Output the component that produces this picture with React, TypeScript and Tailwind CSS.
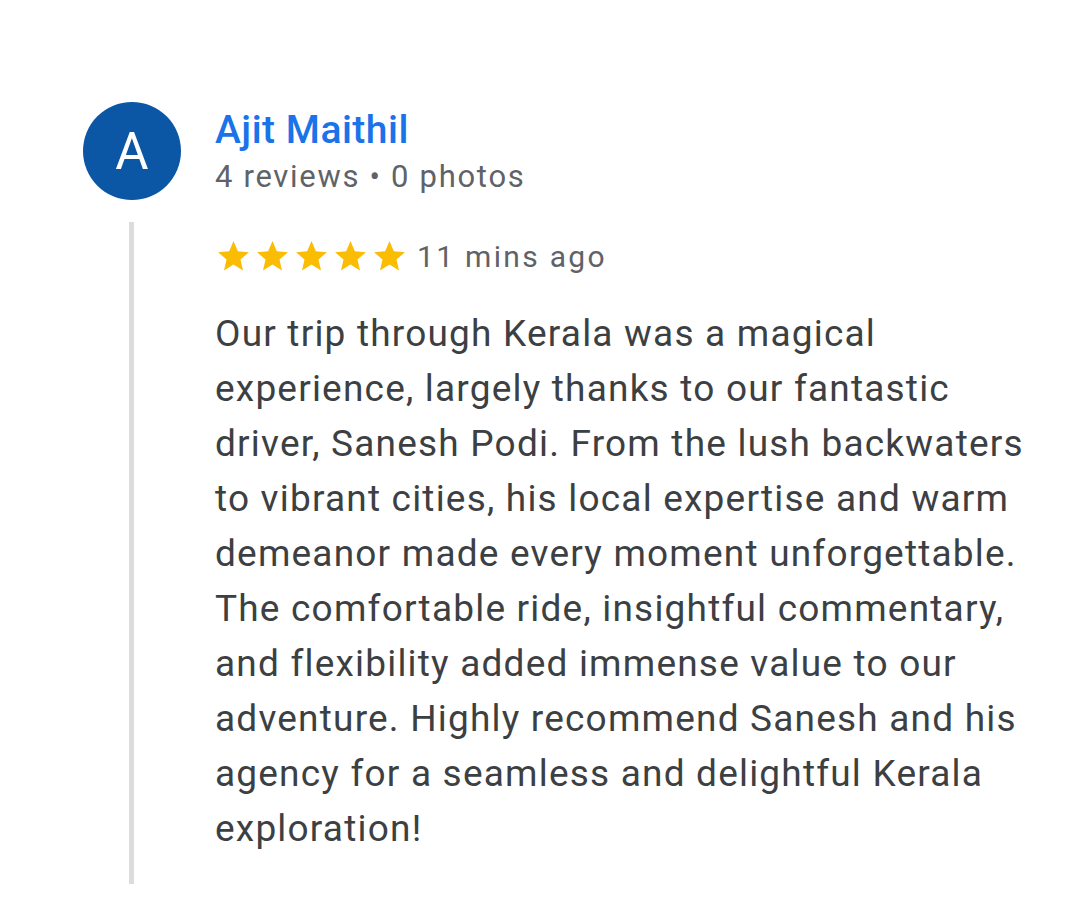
const Star = () => (
  <svg viewBox="0 0 24 24" className="w-[37px] h-[37px] shrink-0" fill="#fbbc04">
    <path d="M12 17.27L18.18 21l-1.64-7.03L22 9.24l-7.19-.61L12 2 9.19 8.63 2 9.24l5.46 4.73L5.82 21z" />
  </svg>
);

const review =
  'Our trip through Kerala was a magical experience, largely thanks to our fantastic driver, Sanesh Podi. From the lush backwaters to vibrant cities, his local expertise and warm demeanor made every moment unforgettable. The comfortable ride, insightful commentary, and flexibility added immense value to our adventure. Highly recommend Sanesh and his agency for a seamless and delightful Kerala exploration!';

export default function App() {
  return (
    <div
      className="w-[1080px] h-[909px] bg-white overflow-hidden pt-[102px] pl-[83px]"
      style={{ fontFamily: 'Roboto, "Noto Sans", sans-serif' }}
    >
      {/* Reviewer */}
      <div className="flex items-start gap-[34px]">
        <div className="w-[98px] h-[98px] rounded-full bg-[#0b57a5] flex items-center justify-center text-white text-[51px] leading-none shrink-0">
          A
        </div>
        <div className="flex flex-col pt-[5px] gap-[4px]">
          <span className="text-[#1a73e8] font-medium text-[39px] leading-[46px] tracking-[0.5px]">Ajit Maithil</span>
          <span className="text-[#5f6368] text-[31px] leading-[40px] tracking-[1.7px]">4 reviews • 0 photos</span>
        </div>
      </div>

      {/* Review body */}
      <div className="flex mt-[22px]">
        <div className="w-[5px] h-[662px] bg-[#dcdcdc] ml-[46px] shrink-0" />
        <div className="pl-[81px] pt-[16px]">
          <div className="flex items-center">
            <div className="flex items-center gap-[2px]">
              <Star />
              <Star />
              <Star />
              <Star />
              <Star />
            </div>
            <span className="ml-[9px] text-[#5f6368] text-[30px] leading-[37px] tracking-[2.3px]">11 mins ago</span>
          </div>
          <p className="mt-[31px] w-[830px] text-[#3c4043] text-[37px] leading-[55px] tracking-[1.2px]">{review}</p>
        </div>
      </div>
    </div>
  );
}
